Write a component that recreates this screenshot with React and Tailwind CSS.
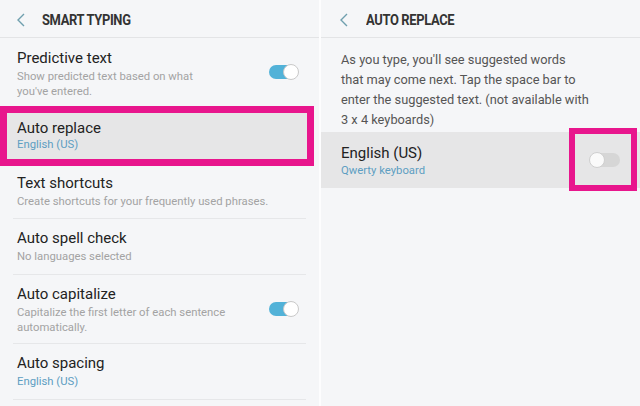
import React from 'react';

const Chevron = () => (
  <svg width="10" height="14" viewBox="0 0 10 14" className="shrink-0">
    <polyline points="8,1 2,7 8,13" fill="none" stroke="#6f9fae" strokeWidth="1.4" />
  </svg>
);

const Toggle = ({ on }) =>
  on ? (
    <div className="relative w-[30px] h-[16px] shrink-0">
      <div className="absolute left-0 top-[1px] w-[28px] h-[14px] rounded-full bg-[#52b2d8]" />
      <div className="absolute right-0 top-0 w-[16px] h-[16px] rounded-full bg-white border border-[#c9c9c9]" />
    </div>
  ) : (
    <div className="relative w-[31px] h-[16px] shrink-0">
      <div className="absolute right-0 top-[1px] w-[27px] h-[14px] rounded-full bg-[#d6d6d6]" />
      <div className="absolute left-0 top-0 w-[16px] h-[16px] rounded-full bg-[#fafafa] border border-[#cfcfcf]" />
    </div>
  );

const Header = ({ title, pad = 'w-[42px]' }) => (
  <div className="h-[38px] shrink-0 flex items-center pt-[3px] border-b border-[#e3e4e6]">
    <div className={`${pad} flex justify-center`}>
      <Chevron />
    </div>
    <span className="text-[15px] font-bold text-[#333] origin-left scale-x-[0.86] tracking-tight">{title}</span>
  </div>
);

const Row = ({ title, sub, blue, toggle, divider = true, h, pt = 'pt-[10px]' }) => (
  <div className={`mx-[13px] shrink-0 flex ${divider ? 'border-b border-[#e6e7e9]' : ''} ${h}`}>
    <div className={`flex-1 pl-[4px] ${pt}`}>
      <div className="text-[15px] leading-[18px] text-[#222]">{title}</div>
      <div className={`mt-[2px] text-[11.3px] leading-[15px] ${blue ? 'text-[#5d9ec2]' : 'text-[#a3a3a3]'}`}>{sub}</div>
    </div>
    {toggle !== undefined && (
      <div className="self-center mr-[7px]">
        <Toggle on={toggle} />
      </div>
    )}
  </div>
);

export default function App() {
  return (
    <div className="w-[640px] h-[406px] flex bg-[#f5f6f8] overflow-hidden" style={{ fontFamily: 'Roboto, "Noto Sans", sans-serif' }}>
      {/* left panel */}
      <div className="w-[319px] flex flex-col">
        <Header title="SMART TYPING" />
        <Row
          title="Predictive text"
          sub={<>Show predicted text based on what<br />you've entered.</>}
          toggle={true}
          divider={false}
          h="h-[68px]"
          pt="pt-[11px]"
        />
        <div className="mr-[5px] h-[60px] shrink-0 border-[7px] border-[#e8168d] bg-[#e6e6e7] pl-[10px] pt-[6px]">
          <div className="text-[15px] leading-[18px] text-[#222]">Auto replace</div>
          <div className="text-[11.3px] leading-[15px] text-[#5d9ec2]">English (US)</div>
        </div>
        <Row title="Text shortcuts" sub="Create shortcuts for your frequently used phrases." h="h-[53px]" pt="pt-[8px]" />
        <Row title="Auto spell check" sub="No languages selected" h="h-[56px]" />
        <Row
          title="Auto capitalize"
          sub={<>Capitalize the first letter of each sentence<br />automatically.</>}
          toggle={true}
          h="h-[69px]"
        />
        <Row title="Auto spacing" sub="English (US)" blue h="h-[56px]" />
      </div>

      {/* separator */}
      <div className="w-[2px] bg-[#fdfdfe]" />

      {/* right panel */}
      <div className="flex-1 flex flex-col">
        <Header title="AUTO REPLACE" pad="w-[45px]" />
        <p className="pl-[20px] pt-[12px] text-[12.8px] leading-[20px] text-[#555] whitespace-nowrap">
          As you type, you'll see suggested words<br />
          that may come next. Tap the space bar to<br />
          enter the suggested text. (not available with<br />
          3 x 4 keyboards)
        </p>
        <div className="relative mt-[2px] h-[56px] bg-[#e6e6e7] pl-[20px] pt-[12px]">
          <div className="text-[15px] leading-[18px] text-[#222]">English (US)</div>
          <div className="mt-[1px] text-[11.3px] leading-[15px] text-[#5d9ec2]">Qwerty keyboard</div>
          <div className="absolute left-[248px] right-[3px] top-[-4px] bottom-[-3px] border-[6px] border-[#e8168d] flex items-center justify-center pl-[2px]">
            <Toggle on={false} />
          </div>
        </div>
      </div>
    </div>
  );
}
